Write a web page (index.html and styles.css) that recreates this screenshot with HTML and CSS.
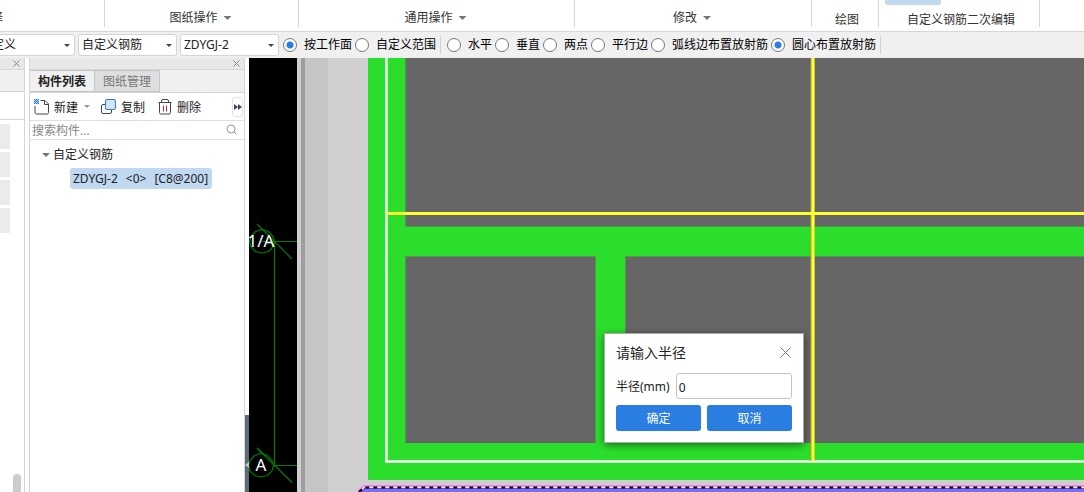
FILE: index.html
```html
<!DOCTYPE html>
<html lang="zh-CN">
<head>
<meta charset="utf-8">
<title>自定义钢筋</title>
<link rel="stylesheet" href="styles.css">
</head>
<body>
<div class="app">
  <header class="ribbon">
    <div class="group group-select"><span>选择</span></div>
    <button class="group group-sheet">图纸操作<i class="caret"></i></button>
    <button class="group group-common">通用操作<i class="caret"></i></button>
    <button class="group group-modify">修改<i class="caret"></i></button>
    <div class="group group-draw">绘图</div>
    <div class="group group-edit"><i class="active-tool"></i>自定义钢筋二次编辑</div>
  </header>

  <div class="options">
    <div class="combos">
      <span class="combo"><select aria-label="类别"><option>自定义</option></select></span>
      <span class="combo"><select aria-label="类型"><option>自定义钢筋</option></select></span>
      <span class="combo"><select aria-label="构件"><option>ZDYGJ-2</option></select></span>
    </div>
    <div class="choices">
      <label><input type="radio" name="scope" checked>按工作面</label>
      <label><input type="radio" name="scope">自定义范围</label>
    </div>
    <div class="choices">
      <label><input type="radio" name="mode">水平</label>
      <label><input type="radio" name="mode">垂直</label>
      <label><input type="radio" name="mode">两点</label>
      <label><input type="radio" name="mode">平行边</label>
      <label><input type="radio" name="mode">弧线边布置放射筋</label>
      <label><input type="radio" name="mode" checked>圆心布置放射筋</label>
    </div>
  </div>

  <div class="workspace">
    <aside class="dock">
      <div class="titlebar"><button class="close" aria-label="关闭"><svg width="7" height="7" viewBox="0 0 7 7"><path d="M.5.5l6 6M6.500.5l-6 6"/></svg></button></div>
      <div class="dock-tabs"></div>
      <div class="dock-tools"></div>
      <div class="dock-list"><i></i><i></i><i></i><i></i></div>
      <div class="dock-thumb"></div>
    </aside>

    <aside class="panel">
      <div class="titlebar"><button class="close" aria-label="关闭"><svg width="7" height="7" viewBox="0 0 7 7"><path d="M.5.5l6 6M6.500.5l-6 6"/></svg></button></div>
      <div class="tabs">
        <button class="tab current">构件列表</button>
        <button class="tab">图纸管理</button>
      </div>
      <div class="tools">
        <button class="tool tool-new">
          <svg width="16" height="16" viewBox="0 0 16 16"><path class="ink" d="M1 7v6.500A1.500 1.500 0 0 0 2.500 15h10.500a1.500 1.500 0 0 0 1.500-1.500V5L11 1.500H6.500M10.500 1.500V5.500h4"/><rect class="tint" width="5" height="5"/><path class="blue-fill" d="M0 0h1v1H0zM2 0h1v1H2zM4 0h1v1H4zM1 1h1v1H1zM3 1h1v1H3zM0 2h1v1H0zM2 2h1v1H2zM4 2h1v1H4zM1 3h1v1H1zM3 3h1v1H3zM0 4h1v1H0zM2 4h1v1H2zM4 4h1v1H4z"/></svg>
          <span>新建</span><i class="caret small"></i>
        </button>
        <button class="tool tool-copy">
          <svg width="16" height="16" viewBox="0 0 16 16"><rect class="ink" x=".5" y="5.500" width="10" height="9" rx="1.500"/><rect class="front" x="4.500" y=".5" width="10" height="10" rx="1.500"/></svg>
          <span>复制</span>
        </button>
        <button class="tool tool-delete">
          <svg width="14" height="16" viewBox="0 0 14 16"><path class="ink" d="M.5 3.500h13M3.500 3.500V2A1.500 1.500 0 0 1 5 .5h4A1.500 1.500 0 0 1 10.500 2v1.500M1.500 3.500v10A1.500 1.500 0 0 0 3 15h8a1.500 1.500 0 0 0 1.500-1.500v-10"/><path class="red" d="M5.500 6.500v6M8.500 6.500v6"/></svg>
          <span>删除</span>
        </button>
        <button class="more" aria-label="更多"><svg width="8" height="6" viewBox="0 0 8 6"><path d="M0 0l4 3-4 3zM4 0l4 3-4 3z"/></svg></button>
      </div>
      <div class="search">
        <input type="text" placeholder="搜索构件..." aria-label="搜索构件">
        <svg width="12" height="12" viewBox="0 0 12 12"><circle cx="5" cy="5" r="4"/><path d="M8 8l2.500 2.500"/></svg>
      </div>
      <ul class="tree">
        <li><div class="branch"><i class="caret"></i>自定义钢筋</div>
          <ul><li><a class="leaf" href="#item"><span>ZDYGJ-2</span> <span>&lt;0&gt;</span> <span>[C8@200]</span></a></li></ul>
        </li>
      </ul>
    </aside>

    <div class="splitter"><div class="handle"><svg width="4" height="6" viewBox="0 0 4 6"><path d="M4 0v6L0 3z"/></svg></div></div>

    <main class="canvas">
      <svg class="drawing" viewBox="249 58 835 434" preserveAspectRatio="xMinYMin slice">
        <rect x="249" y="58" width="48" height="434" fill="#000"/>
        <rect x="297" y="58" width="787" height="434" fill="#cfcfcf"/>
        <rect x="301" y="58" width="4" height="434" fill="#9e9e9e"/>
        <rect x="305" y="58" width="23" height="434" fill="#c5c5c5"/>
        <rect x="368" y="58" width="716" height="422" fill="#2cde2c"/>
        <g fill="#666">
          <rect x="405" y="58" width="679" height="168"/>
          <rect x="405" y="256" width="191" height="187"/>
          <rect x="625" y="256" width="459" height="187"/>
        </g>
        <path d="M405.500 58v168.500H1084M405.500 443V256.500H596M595.500 256v187M625.500 443V256.500H1084" fill="none" stroke="#4c9a4c" stroke-width="1"/>
        <path d="M386.500 58V461.500H1084" fill="none" stroke="#a8f0a8" stroke-width="3"/>
        <path d="M386.500 58V461.500H1084" fill="none" stroke="#fff" stroke-width="1.500"/>
        <path d="M812.500 58V461" stroke="#a8a83c" stroke-width="4"/>
        <path d="M387 213.500H1084M813 58V461" stroke="#ffff2d" stroke-width="3"/>
        <path d="M358 492L364 486H1084V492z" fill="#7b72e8"/>
        <path d="M358 492L364 486.500H1084" fill="none" stroke="#f884f8" stroke-width="3"/>
        <path d="M361 492L365 488.500H1084" fill="none" stroke="#6048f0" stroke-width="1"/>
        <path d="M359 492L364 487.500H1084" fill="none" stroke="#fff" stroke-width="1"/>
        <path d="M359 492L364 487.500H1084" fill="none" stroke="#000" stroke-width="2" stroke-dasharray="4 4"/>
        <g fill="none" stroke="#007d00" stroke-width="1.200">
          <path d="M274.500 241V465M262 241.500H297M257 224L292 259M249 465.500H297M257 448L292 482.500"/>
          <path d="M262 229.500l6.500 2 4.500 5 1.500 5-1.500 5.500-4.500 4.500-6.500 1.500-6.500-1.500-4.500-4.500-1.500-5.500 1.500-5 4.500-5z"/>
        </g>
        <path d="M261 453.500l6.500 2 4.500 5 1.500 5-1.500 5.500-4.500 4.500-6.500 1.500-6.500-1.500-4.500-4.500-1.500-5.500 1.500-5 4.500-5z" fill="#000" stroke="#007d00" stroke-width="1.200"/>
        <path d="M257 448L272 463" fill="none" stroke="#007d00" stroke-width="1.200"/>
        <text class="axis" x="261" y="247" text-anchor="middle">1/A</text>
        <text class="axis" x="261" y="471" text-anchor="middle">A</text>
      </svg>

      <form class="dialog" role="dialog" aria-labelledby="dialog-title">
        <div class="dialog-head">
          <h2 id="dialog-title">请输入半径</h2>
          <button type="button" class="dismiss" aria-label="关闭"><svg width="12" height="12" viewBox="0 0 12 12"><path d="M.5.5l10 10M10.500.5l-10 10"/></svg></button>
        </div>
        <div class="field"><label for="radius">半径(mm)</label><input id="radius" type="text" value="0"></div>
        <div class="actions"><button type="button">确定</button><button type="button">取消</button></div>
      </form>
    </main>
  </div>
</div>
</body>
</html>
```

FILE: styles.css
```css
* { box-sizing: border-box; }

body {
  margin: 0;
  overflow: hidden;
  font-family: "Noto Sans", "Noto Sans CJK SC", sans-serif;
  font-size: 12px;
  line-height: 16px;
  color: #222;
}

button, input, select { font: inherit; color: inherit; }
button { margin: 0; padding: 0; border: 0; background: none; }
svg { display: block; flex: none; }
ul { margin: 0; padding: 0; list-style: none; }

.app { display: flex; flex-direction: column; height: 100vh; }

/* Ribbon */
.ribbon {
  display: flex;
  flex: none;
  height: 32px;
  padding-bottom: 4px;
  background: #fff;
  border-bottom: 1px solid #d6d6d6;
}
.group {
  position: relative;
  display: flex;
  flex: none;
  justify-content: center;
  align-items: flex-start;
  gap: 6px;
  padding: 10px 2px 0 0;
  border-right: 1px solid #d6d6d6;
  color: #333;
}
.group .caret { margin-top: 6px; }
.group-select { width: 105px; justify-content: flex-start; }
.group-select span { margin-left: -21px; }
.group-sheet { width: 194px; }
.group-common { width: 276px; }
.group-modify { width: 237px; }
.group-draw { width: 67px; padding: 12px 0 0 4px; }
.group-edit { width: 161px; padding: 12px 0 0 4px; }
.active-tool {
  position: absolute;
  top: 0;
  left: 6px;
  width: 56px;
  height: 5px;
  background: #c1d8f1;
  border-radius: 0 0 3px 3px;
}
.caret {
  flex: none;
  width: 8px;
  height: 4px;
  background: #777;
  clip-path: polygon(0 0, 100% 0, 50% 100%);
}
.caret.small { width: 6px; height: 3px; background: #999; }

/* Options bar */
.options {
  display: flex;
  flex: none;
  align-items: center;
  height: 26px;
  background: #f0f0f0;
  color: #000;
  white-space: nowrap;
}
.combos { display: flex; gap: 3px; margin-left: -24px; }
.combo { position: relative; width: 99px; }
.combo select {
  appearance: none;
  display: block;
  width: 100%;
  height: 22px;
  padding: 0 3px;
  background: #fff;
  color: #222;
  border: 1px solid #d4d4d4;
  border-radius: 3px;
}
.combo::after {
  content: "";
  position: absolute;
  top: 10px;
  right: 5px;
  width: 6px;
  height: 3px;
  background: #444;
  clip-path: polygon(0 0, 100% 0, 50% 100%);
  pointer-events: none;
}
.choices {
  display: flex;
  align-items: center;
  gap: 3px;
  height: 18px;
  padding: 0 4px;
  border-right: 1px solid #d0d0d0;
}
.choices + .choices { padding: 0 4px 0 6px; }
.choices label { display: flex; align-items: center; gap: 7px; }
.choices input {
  appearance: none;
  width: 14px;
  height: 14px;
  margin: 0;
  background: #fff;
  border: 1px solid #777;
  border-radius: 50%;
}
.choices input:checked { background: radial-gradient(circle, #2a7de1 3px, #fff 4px); }

/* Docked panels */
.workspace { display: flex; flex: 1; min-height: 0; }
.titlebar {
  display: flex;
  flex: none;
  justify-content: flex-end;
  align-items: center;
  height: 12px;
  padding-right: 4px;
  background: #e8e8e8;
  border-bottom: 1px solid #d6d6d6;
}
.close svg { fill: none; stroke: #888; }
.dock {
  display: flex;
  flex: none;
  flex-direction: column;
  width: 25px;
  margin-right: 4px;
  background: #fff;
  border-right: 1px solid #d6d6d6;
}
.dock-tabs { height: 22px; background: #f0f0f0; border-bottom: 1px solid #d6d6d6; }
.dock-tools { height: 28px; border-bottom: 1px solid #d6d6d6; }
.dock-list { display: grid; gap: 3px; padding-top: 4px; }
.dock-list i { width: 10px; height: 25px; background: #ebebeb; }
.dock-thumb {
  align-self: flex-end;
  width: 8px;
  height: 18px;
  margin: auto 3px 0 0;
  background: #ccc;
  border-radius: 4px 4px 0 0;
}
.panel {
  display: flex;
  flex: none;
  flex-direction: column;
  width: 216px;
  background: #fff;
  border: solid #d6d6d6;
  border-width: 0 1px;
}
.tabs {
  display: flex;
  height: 23px;
  background: #f0f0f0;
  border-bottom: 1px solid #d6d6d6;
}
.tab {
  width: 65px;
  padding-top: 2px;
  background: #dedede;
  border: 1px solid #c2c5cc;
  border-left: 0;
  color: #777;
}
.tab.current { background: #f0f0f0; color: #222; font-weight: 700; }
.tools {
  display: flex;
  align-items: center;
  height: 28px;
  padding: 0 1px 0 4px;
  border-bottom: 1px solid #e0e0e0;
}
.tool { display: flex; align-items: center; gap: 4px; }
.tool span { padding-top: 2px; }
.tool .caret { margin-left: 2px; }
.tool-copy { margin-left: 11px; }
.tool-delete { margin-left: 13px; gap: 5px; }
.ink { fill: none; stroke: #404653; }
.tint { fill: #a9cdf6; }
.blue-fill { fill: #2a7de1; }
.front { fill: #d2e4fa; stroke: #2a7de1; }
.red { fill: none; stroke: #e02030; }
.more {
  display: flex;
  align-items: center;
  justify-content: center;
  width: 11px;
  height: 20px;
  margin-left: auto;
  border: 1px solid #e2e2e2;
  border-radius: 3px;
}
.more svg { fill: #404653; }
.search {
  display: flex;
  align-items: center;
  height: 19px;
  padding-right: 6px;
  border-bottom: 1px solid #e0e0e0;
}
.search input {
  flex: 1;
  min-width: 0;
  height: 18px;
  padding: 0 2px;
  border: 0;
  outline: 0;
  background: none;
}
.search input::placeholder { color: #888; opacity: 1; }
.search svg { fill: none; stroke: #999; }
.tree { padding-top: 6px; }
.branch { display: flex; align-items: center; gap: 3px; height: 18px; padding-left: 12px; }
.tree ul { padding: 4px 0 0 40px; }
.leaf {
  display: inline-flex;
  gap: 8px;
  height: 21px;
  padding: 0 4px 0 3px;
  line-height: 21px;
  background: #c1d8f1;
  border-radius: 3px;
  color: #222;
  text-decoration: none;
}
.splitter { display: flex; flex: none; flex-direction: column; width: 4px; background: #fff; }
.handle {
  display: flex;
  align-items: center;
  height: 100px;
  margin: 357px 0 -23px;
  background: #5e6b78;
}
.handle svg { fill: #c0c6cc; }

/* Drawing area */
.canvas { position: relative; flex: 1; min-width: 0; overflow: hidden; }
.drawing { width: 100%; height: 100%; }
.axis { font-size: 17px; fill: #fff; }

.dialog {
  position: absolute;
  top: 275px;
  left: 355px;
  display: flex;
  flex-direction: column;
  width: 200px;
  padding: 10px 11px 11px;
  background: #fff;
  border: 1px solid #aaa;
  box-shadow: 0 2px 8px rgba(0, 0, 0, .5);
}
.dialog-head {
  display: flex;
  align-items: center;
  justify-content: space-between;
  height: 18px;
  margin-bottom: 11px;
}
.dialog h2 { margin: 0; font-size: 14px; font-weight: 400; }
.dismiss svg { fill: none; stroke: #777; }
.field { display: flex; align-items: center; gap: 6px; margin-bottom: 6px; }
.field label { padding-top: 2px; }
.field input {
  flex: 1;
  min-width: 0;
  height: 26px;
  padding: 2px 2px 0;
  border: 1px solid #c4c4c4;
  border-radius: 3px;
}
.actions { display: grid; grid-template-columns: 1fr 1fr; gap: 6px; }
.actions button { height: 26px; padding-top: 2px; background: #2a7de1; border-radius: 3px; color: #fff; }
```
